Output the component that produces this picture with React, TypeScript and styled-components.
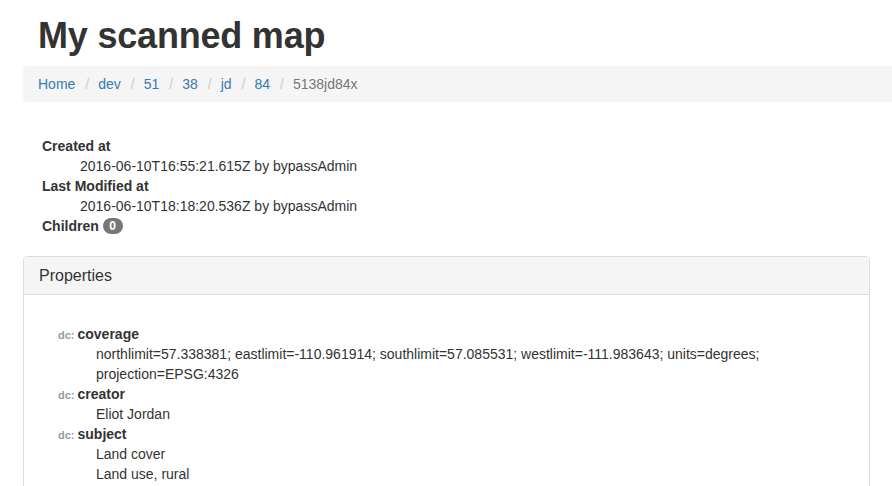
import React from "react";
import styled, { createGlobalStyle } from "styled-components";

const Global = createGlobalStyle`
  html, body { margin: 0; padding: 0; background: #fff; }
  body {
    font-family: "Liberation Sans", Arial, sans-serif;
    font-size: 14px;
    line-height: 20px;
    color: #333;
    overflow: hidden;
  }
`;

const Page = styled.div`
  padding: 0 22px 0 23px;
`;

const Title = styled.h1`
  font-size: 36px;
  font-weight: bold;
  line-height: 1.1;
  margin: 16px 0 10px 15px;
  color: #333;
  letter-spacing: -0.2px;
`;

const Breadcrumb = styled.ol`
  list-style: none;
  margin: 0 -40px 34px 0;
  padding: 8px 15px;
  background: #f5f5f5;
  border-radius: 4px;
  display: flex;
`;

const Crumb = styled.li<{ $active?: boolean }>`
  color: ${(p) => (p.$active ? "#777" : "#337ab7")};
  &:not(:first-child)::before {
    content: "/";
    color: #ccc;
    padding: 0 9px 0 10px;
  }
`;

const CrumbLink = styled.a`
  color: #337ab7;
  text-decoration: none;
`;

const Meta = styled.dl`
  margin: 0 0 20px 19px;
`;

const Term = styled.dt`
  font-weight: bold;
  height: 20px;
`;

const Desc = styled.dd`
  margin: 0 0 0 38px;
`;

const Badge = styled.span`
  display: inline-block;
  min-width: 8px;
  padding: 2px 6px;
  font-size: 12px;
  font-weight: bold;
  line-height: 1;
  color: #fff;
  text-align: center;
  background: #777;
  border-radius: 10px;
  margin-left: 0;
  vertical-align: 1px;
`;

const Panel = styled.div`
  border: 1px solid #ddd;
  border-radius: 4px;
  box-shadow: 0 1px 1px rgba(0, 0, 0, 0.05);
`;

const PanelHeading = styled.div`
  background: #f5f5f5;
  border-bottom: 1px solid #ddd;
  border-radius: 3px 3px 0 0;
  padding: 10px 15px;
`;

const PanelTitle = styled.h3`
  margin: 0;
  font-size: 16px;
  font-weight: normal;
  line-height: 1.1;
  color: #333;
`;

const PanelBody = styled.div`
  padding: 29px 15px 15px 34px;
`;

const PropList = styled.dl`
  margin: 0;
`;

const PropName = styled.dt`
  font-weight: bold;
  height: 20px;
`;

const Ns = styled.span`
  font-size: 11px;
  line-height: 1;
  color: #999;
  font-weight: bold;
  margin-right: 3px;
`;

const PropValue = styled.dd`
  margin: 0 0 0 38px;
`;

const props = [
  {
    ns: "dc:",
    name: "coverage",
    values: [
      "northlimit=57.338381; eastlimit=-110.961914; southlimit=57.085531; westlimit=-111.983643; units=degrees; projection=EPSG:4326",
    ],
  },
  { ns: "dc:", name: "creator", values: ["Eliot Jordan"] },
  { ns: "dc:", name: "subject", values: ["Land cover", "Land use, rural"] },
];

const crumbs = ["Home", "dev", "51", "38", "jd", "84"];

export default function App() {
  return (
    <>
      <Global />
      <Page>
        <Title>My scanned map</Title>
        <Breadcrumb>
          {crumbs.map((c) => (
            <Crumb key={c}>
              <CrumbLink href="#">{c}</CrumbLink>
            </Crumb>
          ))}
          <Crumb $active>5138jd84x</Crumb>
        </Breadcrumb>
        <Meta>
          <Term>Created at</Term>
          <Desc>2016-06-10T16:55:21.615Z by bypassAdmin</Desc>
          <Term>Last Modified at</Term>
          <Desc>2016-06-10T18:18:20.536Z by bypassAdmin</Desc>
          <Term>
            Children <Badge>0</Badge>
          </Term>
        </Meta>
        <Panel>
          <PanelHeading>
            <PanelTitle>Properties</PanelTitle>
          </PanelHeading>
          <PanelBody>
            <PropList>
              {props.map((p) => (
                <React.Fragment key={p.name}>
                  <PropName>
                    <Ns>{p.ns}</Ns>
                    {p.name}
                  </PropName>
                  {p.values.map((v) => (
                    <PropValue key={v}>{v}</PropValue>
                  ))}
                </React.Fragment>
              ))}
            </PropList>
          </PanelBody>
        </Panel>
      </Page>
    </>
  );
}
